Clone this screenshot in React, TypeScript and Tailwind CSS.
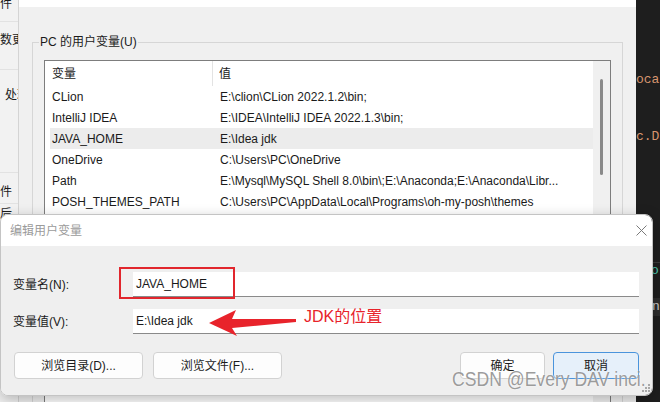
import React from "react";

const userVars = [
  ["CLion", "E:\\clion\\CLion 2022.1.2\\bin;"],
  ["IntelliJ IDEA", "E:\\IDEA\\IntelliJ IDEA 2022.1.3\\bin;"],
  ["JAVA_HOME", "E:\\Idea jdk"],
  ["OneDrive", "C:\\Users\\PC\\OneDrive"],
  ["Path", "E:\\Mysql\\MySQL Shell 8.0\\bin\\;E:\\Anaconda;E:\\Anaconda\\Libr..."],
  ["POSH_THEMES_PATH", "C:\\Users\\PC\\AppData\\Local\\Programs\\oh-my-posh\\themes"],
  ["TEMP", "%USERPROFILE%\\AppData\\Local\\Temp"],
  ["TMP", "%USERPROFILE%\\AppData\\Local\\Temp"],
];

const sysVars = [
  ["ComSpec", "C:\\Windows\\system32\\cmd.exe"],
  ["DriverData", "C:\\Windows\\System32\\Drivers\\DriverData"],
  ["NUMBER_OF_PROCESSORS", "16"],
  ["OS", "Windows_NT"],
  ["Path", "C:\\Program Files\\Common Files\\Oracle\\Java\\javapath;"],
  ["PATHEXT", ".COM;.EXE;.BAT;.CMD;.VBS;.VBE;.JS;.JSE;.WSF;.WSH;.MSC"],
];

// list box with header + scrollbar, like the win32 ListView
function VarList({ rows, selected, height, thumbTop, thumbH }: { rows: string[][]; selected?: string; height: string; thumbTop: string; thumbH: string }) {
  return (
    <div className={`flex border border-[#7d7d7d] bg-white overflow-hidden ${height}`}>
      <div className="flex-1 min-w-0 flex flex-col pl-[5px]">
        <div className="flex h-[25px] shrink-0 items-center">
          <div className="w-[163px] h-full flex items-center pl-[2px] border-r border-[#e3e3e3]">变量</div>
          <div className="pl-[6px]">值</div>
        </div>
        {rows.map(([k, v]) => (
          <div key={k + v} className={`flex h-[21px] shrink-0 items-center ${k === selected ? "bg-[#ececec]" : ""}`}>
            <div className="w-[163px] shrink-0 pl-[2px] whitespace-nowrap">{k}</div>
            <div className="flex-1 min-w-0 pl-[7px] truncate">{v}</div>
          </div>
        ))}
      </div>
      <div className={`w-[17px] shrink-0 bg-[#f0f0f0] flex justify-center ${thumbTop}`}>
        <div className={`w-[3px] rounded-full bg-[#8a8a8a] ${thumbH}`} />
      </div>
    </div>
  );
}

function Btn({ children, primary, className }: { children: React.ReactNode; primary?: boolean; className?: string }) {
  return (
    <div
      className={`h-[27px] flex items-center justify-center rounded-[4px] border text-[12px] text-[#1b1b1b] ${
        primary ? "bg-[#e6f0fa] border-[#4a94dc]" : "bg-[#fdfdfd] border-[#d2d2d2]"
      } ${className ?? ""}`}
    >
      {children}
    </div>
  );
}

export default function App() {
  return (
    <div className="relative w-[660px] h-[402px] overflow-hidden flex bg-[#1e1e1e] text-[12px] text-[#1a1a1a] font-['Liberation_Sans','Noto_Sans_CJK_SC',sans-serif]">
      {/* window behind, clipped at left */}
      <div className="w-[19px] shrink-0 h-full bg-[#f2f2f2] border-r border-[#d4d4d4] overflow-hidden flex flex-col">
        <div className="h-[24px] border-b border-[#e2e2e2] flex justify-end pr-[6px] items-start leading-[12px] -mt-[2px] whitespace-nowrap">文件</div>
        <div className="h-[48px] border-b border-[#e2e2e2] pt-[11px] -ml-[12px] whitespace-nowrap leading-[14px]">参数更改</div>
        <div className="h-[103px] border-b border-[#e2e2e2] pt-[18px] pl-[5px] whitespace-nowrap leading-[14px]">处理</div>
        <div className="h-[30px] pt-[12px] -ml-[12px] whitespace-nowrap leading-[14px]">文件</div>
        <div className="border-t border-[#e2e2e2] pt-[3px] -ml-[12px] whitespace-nowrap leading-[14px]">之后</div>
      </div>

      {/* environment variables window */}
      <div className="w-[617px] shrink-0 h-full bg-[#f0f0f0] flex flex-col overflow-hidden">
        <div className="h-[7px] shrink-0 bg-white" />
        <div className="px-[13px] pt-[27px] flex flex-col">
          <fieldset className="min-w-0 border border-[#d6d6d6] px-0">
            <legend className="ml-[6px] px-[1px] leading-[16px]">PC 的用户变量(U)</legend>
            <div className="px-[11px] pt-[10px]">
              <VarList rows={userVars} selected="JAVA_HOME" height="h-[176px]" thumbTop="pt-[18px]" thumbH="h-[96px]" />
              <div className="flex justify-end gap-[8px] mt-[6px] mb-[2px]">
                <Btn className="w-[85px]">新建(N)...</Btn>
                <Btn className="w-[85px]">编辑(E)...</Btn>
                <Btn className="w-[85px]">删除(D)</Btn>
              </div>
            </div>
          </fieldset>
          <fieldset className="min-w-0 border border-[#d6d6d6] px-0">
            <legend className="ml-[6px] px-[1px] leading-[16px]">系统变量(S)</legend>
            <div className="px-[11px]">
              <VarList rows={sysVars} height="h-[160px]" thumbTop="pt-[20px]" thumbH="h-[70px]" />
            </div>
          </fieldset>
        </div>
      </div>

      {/* code editor peeking at right */}
      <div className="flex-1 min-w-0 h-full overflow-hidden flex flex-col font-['Liberation_Mono',monospace] text-[13px] whitespace-nowrap">
        <div className="h-[72px] shrink-0" />
        <div className="h-[16px] leading-[16px] text-[#d7956f]">ocal</div>
        <div className="h-[41px] shrink-0" />
        <div className="h-[16px] leading-[16px] text-[#d7956f]">c.D</div>
        <div className="h-[117px] shrink-0" />
        <div className="h-[17px] leading-[16px] border-t border-[#3a3a3a] pl-[15px] text-[#4ec9b0]">o</div>
        <div className="h-[19px] shrink-0" />
        <div className="h-[18px] leading-[18px] bg-[#2d2d2d] pl-[16px] text-[#c8c8c8]">n</div>
      </div>

      {/* edit dialog */}
      <div className="absolute left-0 top-[214px] w-[653px] h-[182px] rounded-[8px] border border-[#c4c4c4] overflow-hidden flex flex-col shadow-[0_4px_14px_rgba(0,0,0,0.25)]">
        <div className="h-[31px] shrink-0 bg-white flex items-center justify-between pl-[9px] pr-[5px]">
          <span className="text-[#9b9b9b]">编辑用户变量</span>
          <svg width="11" height="11" viewBox="0 0 11 11">
            <path d="M0.5 0.5 L10.5 10.5 M10.5 0.5 L0.5 10.5" stroke="#7a7a7a" strokeWidth="1" />
          </svg>
        </div>
        <div className="flex-1 bg-[#efefef] flex flex-col pt-[26px] pl-[12px] pr-[13px]">
          <div className="flex items-center h-[25px]">
            <div className="w-[120px] shrink-0">变量名(N):</div>
            <div className="flex-1 h-full bg-white border-b border-[#8a8a8a] flex items-center pl-[3px]">JAVA_HOME</div>
          </div>
          <div className="flex items-center h-[25px] mt-[12px]">
            <div className="w-[120px] shrink-0">变量值(V):</div>
            <div className="flex-1 h-full bg-white border-b border-[#8a8a8a] flex items-center pl-[3px]">E:\Idea jdk</div>
          </div>
          <div className="flex mt-[18px] pl-[1px]">
            <Btn className="w-[129px]">浏览目录(D)...</Btn>
            <Btn className="w-[129px] ml-[10px]">浏览文件(F)...</Btn>
            <div className="flex-1" />
            <Btn className="w-[85px]">确定</Btn>
            <Btn primary className="w-[86px] ml-[8px]">取消</Btn>
          </div>
        </div>
      </div>

      {/* resize grip */}
      <svg className="absolute left-[642px] top-[384px]" width="9" height="9" viewBox="0 0 9 9">
        <g fill="#a8a8a8">
          <rect x="6" y="0" width="2" height="2" />
          <rect x="3" y="3" width="2" height="2" />
          <rect x="6" y="3" width="2" height="2" />
          <rect x="0" y="6" width="2" height="2" />
          <rect x="3" y="6" width="2" height="2" />
          <rect x="6" y="6" width="2" height="2" />
        </g>
      </svg>

      {/* annotations */}
      <div className="absolute left-[119px] top-[267px] w-[116px] h-[32px] border-2 border-[#e1262d]" />
      <svg className="absolute left-[208px] top-[308px]" width="90" height="30" viewBox="0 0 90 30">
        <polygon points="1,15 28,2 24,11 88,11 88,14 24,20 29,28" fill="#e8232b" />
      </svg>
      <div className="absolute left-[304px] top-[307px] text-[16px] leading-[20px] text-[#e8232b] whitespace-nowrap">JDK的位置</div>

      <div className="absolute left-[452px] top-[368px] text-[20px] leading-[22px] text-[#8a8a8a]/85 whitespace-nowrap scale-x-[0.88] origin-left [text-shadow:0_0_2px_#ffffff]">
        CSDN @Every DAV inci.
      </div>
    </div>
  );
}
